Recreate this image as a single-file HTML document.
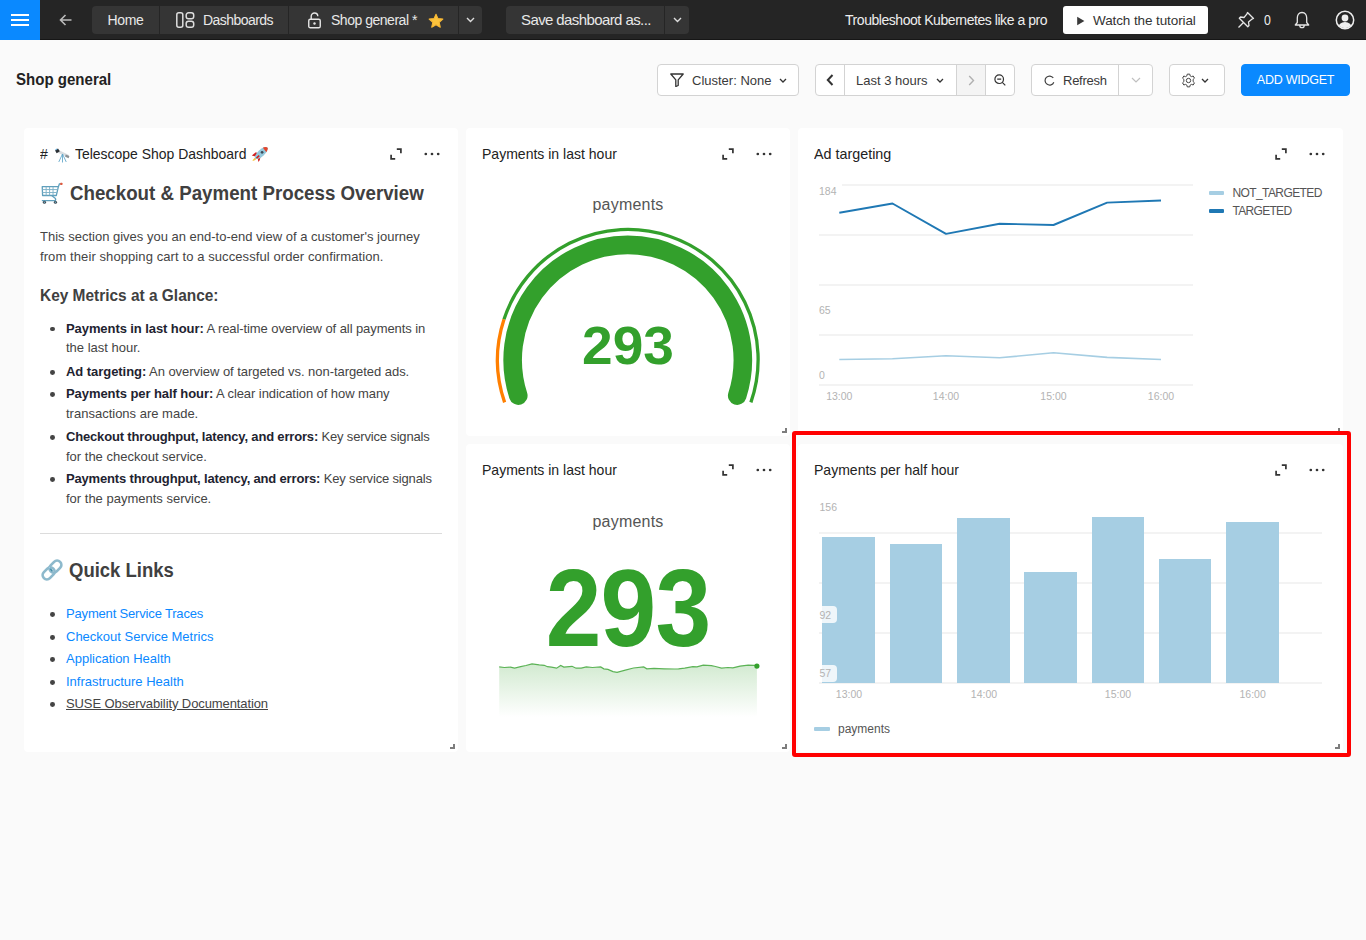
<!DOCTYPE html>
<html><head><meta charset="utf-8">
<style>
*{box-sizing:border-box;margin:0;padding:0}
html,body{width:1366px;height:940px;overflow:hidden;background:#fafafa;font-family:"Liberation Sans",sans-serif;color:#222}
.abs{position:absolute}
#top{position:absolute;left:0;top:0;width:1366px;height:40px;background:#252525;border-bottom:1px solid #161616}
#ham{position:absolute;left:0;top:0;width:40px;height:40px;background:#0a89ff}
#ham i{position:absolute;left:11px;width:18px;height:2px;background:#fff}
.tb{position:absolute;top:6px;height:28px;background:#353535;color:#e8e8e8;font-size:14px;letter-spacing:-0.35px;display:flex;align-items:center;white-space:nowrap}
.txt{position:absolute;white-space:nowrap}
.btn{position:absolute;top:64px;height:32px;background:#fff;border:1px solid #d3d3d3;border-radius:4px;color:#3a3a3a;font-size:13px;display:flex;align-items:center;white-space:nowrap}
.card{position:absolute;background:#fff;border-radius:4px}
.ctitle{position:absolute;left:16px;top:17px;font-size:15px;color:#222;white-space:nowrap;line-height:18px;transform-origin:0 0;transform:scaleX(0.935)}
.exp{position:absolute;width:12px;height:12px}
.dots{position:absolute}
.handle{position:absolute;width:5px;height:5px;border-right:2px solid #7d7d7d;border-bottom:2px solid #7d7d7d}
.md{color:#444;font-size:13px}
.md b{color:#1e2330}
ul.l{position:absolute;list-style:none}
ul.l li{position:relative;line-height:20px;white-space:nowrap}
ul.l li:before{content:"";position:absolute;left:-16px;top:8px;width:5px;height:5px;border-radius:50%;background:#333}
.dot{width:4.8px;height:4.8px;border-radius:50%;background:#444}
.lk{color:#0a88ff}
.axl{position:absolute;font-size:10.5px;color:#b3b3b3;white-space:nowrap}
</style></head><body>

<!-- TOP BAR -->
<div id="top">
  <div id="ham"><i style="top:14px"></i><i style="top:19px"></i><i style="top:24px"></i></div>
  <svg class="abs" style="left:58px;top:13px" width="16" height="14" viewBox="0 0 16 14"><path d="M7.5 2 L2.5 7 L7.5 12 M2.8 7 H13.5" fill="none" stroke="#bbb" stroke-width="1.6"/></svg>
  <div class="tb" style="left:92px;width:67px;border-radius:4px 0 0 4px;justify-content:center">Home</div>
  <div class="tb" style="left:160px;width:128px;padding-left:16px;letter-spacing:-0.55px">
    <svg width="19" height="16" viewBox="0 0 19 16" style="margin-right:8px"><rect x="0.8" y="0.8" width="6" height="14.4" rx="2" fill="none" stroke="#ddd" stroke-width="1.5"/><rect x="10.2" y="0.8" width="7.5" height="6" rx="2.3" fill="none" stroke="#ddd" stroke-width="1.5"/><rect x="10.2" y="9.2" width="7.5" height="6" rx="2.3" fill="none" stroke="#ddd" stroke-width="1.5"/></svg>Dashboards</div>
  <div class="tb" style="left:289px;width:169px;padding-left:18.5px;letter-spacing:-0.48px">
    <svg width="13" height="17" viewBox="0 0 13 17" style="margin-right:10.5px"><path d="M3.2 7 V4.3 A3.3 3.3 0 0 1 9.8 4.3" fill="none" stroke="#e6e6e6" stroke-width="1.4"/><rect x="0.75" y="7.2" width="11.5" height="8.6" rx="1.6" fill="none" stroke="#e6e6e6" stroke-width="1.4"/><circle cx="6.5" cy="11.5" r="1.2" fill="#e6e6e6"/></svg>Shop general *
    <svg width="16" height="16" viewBox="0 0 24 24" style="margin-left:11.5px;margin-top:1px"><path d="M12 1.8 L15 8.4 L22.3 9.1 L16.8 14 L18.4 21.3 L12 17.6 L5.6 21.3 L7.2 14 L1.7 9.1 L9 8.4 Z" fill="#fcc33c" stroke="#f7b733" stroke-width="1.6" stroke-linejoin="round"/></svg></div>
  <div class="tb" style="left:459px;width:23px;border-radius:0 4px 4px 0;justify-content:center"><svg width="9" height="6" viewBox="0 0 9 6"><path d="M1 1 L4.5 4.5 L8 1" fill="none" stroke="#ddd" stroke-width="1.4"/></svg></div>

  <div class="tb" style="left:506px;width:158px;border-radius:4px 0 0 4px;padding-left:15px;padding-bottom:2px;font-size:15px;letter-spacing:-0.6px">Save dashboard as...</div>
  <div class="tb" style="left:665px;width:24px;border-radius:0 4px 4px 0;justify-content:center"><svg width="9" height="6" viewBox="0 0 9 6"><path d="M1 1 L4.5 4.5 L8 1" fill="none" stroke="#ddd" stroke-width="1.4"/></svg></div>

  <div class="txt" style="left:845px;top:11px;font-size:14px;letter-spacing:-0.45px;line-height:18px;color:#eee">Troubleshoot Kubernetes like a pro</div>
  <div class="tb" style="left:1063px;width:145px;background:#fff;color:#333;border-radius:3px;padding-left:14px;font-size:13.5px;letter-spacing:-0.1px">
    <svg width="8" height="10" viewBox="0 0 8 10" style="margin-right:8px;margin-top:1px"><path d="M0.2 0.8 L7.4 5 L0.2 9.2 Z" fill="#3a3a3a"/></svg>Watch the tutorial</div>
  <svg class="abs" style="left:1237px;top:11px" width="18" height="18" viewBox="0 0 18 18"><path d="M10.5 1.5 L16.5 7.5 L14.8 8.2 L11.5 11 L12 14.5 L10.8 15.7 L2.3 7.2 L3.5 6 L7 6.5 L9.8 3.2 Z M6.5 11.5 L1.5 16.5" fill="none" stroke="#e6e6e6" stroke-width="1.3" stroke-linejoin="round"/></svg>
  <div class="txt" style="left:1263.5px;top:11px;font-size:14.5px;line-height:18px;color:#eee;transform-origin:0 0;transform:scaleX(0.85)">0</div>
  <svg class="abs" style="left:1294px;top:11px" width="16" height="18" viewBox="0 0 16 18"><path d="M8 1.5 C4.8 1.5 3.3 4 3.3 7 V11.5 L1.3 14 H14.7 L12.7 11.5 V7 C12.7 4 11.2 1.5 8 1.5 Z M5.8 14.5 A2.2 2.2 0 0 0 10.2 14.5" fill="none" stroke="#e6e6e6" stroke-width="1.3" stroke-linejoin="round"/></svg>
  <svg class="abs" style="left:1335px;top:10px" width="20" height="20" viewBox="0 0 20 20"><defs><clipPath id="uc"><circle cx="10" cy="10" r="8.2"/></clipPath></defs><circle cx="10" cy="10" r="8.7" fill="none" stroke="#eee" stroke-width="1.5"/><circle cx="10" cy="8" r="3.4" fill="#eee"/><ellipse cx="10" cy="18" rx="7" ry="6" fill="#eee" clip-path="url(#uc)"/></svg>
</div>

<!-- PAGE HEADER -->
<div class="txt" style="left:16px;top:70px;font-size:17px;font-weight:bold;line-height:20px;color:#222;transform-origin:0 0;transform:scaleX(0.885)">Shop general</div>

<div class="btn" style="left:657px;width:142px;padding-left:12px">
  <svg width="14" height="14" viewBox="0 0 14 14" style="margin-right:8px"><path d="M0.8 1 H13.2 L8.2 6.8 V12.5 L5.8 13.5 V6.8 Z" fill="none" stroke="#333" stroke-width="1.3" stroke-linejoin="round"/></svg>Cluster: None
  <svg width="8" height="5" viewBox="0 0 8 5" style="margin-left:8px"><path d="M1 1 L4 4 L7 1" fill="none" stroke="#333" stroke-width="1.3"/></svg></div>

<div class="btn" style="left:815px;width:200px;padding:0;overflow:hidden">
  <div style="width:29px;height:30px;border-right:1px solid #d3d3d3;display:flex;align-items:center;justify-content:center"><svg width="8" height="12" viewBox="0 0 8 12"><path d="M6.5 1 L1.8 6 L6.5 11" fill="none" stroke="#333" stroke-width="2"/></svg></div>
  <div style="width:112px;height:30px;border-right:1px solid #d3d3d3;display:flex;align-items:center;padding-left:11px">Last 3 hours<svg width="8" height="5" viewBox="0 0 8 5" style="margin-left:8px"><path d="M1 1 L4 4 L7 1" fill="none" stroke="#333" stroke-width="1.3"/></svg></div>
  <div style="width:29px;height:30px;border-right:1px solid #d3d3d3;background:#f4f4f4;display:flex;align-items:center;justify-content:center"><svg width="7" height="11" viewBox="0 0 7 11"><path d="M1.2 1 L5.5 5.5 L1.2 10" fill="none" stroke="#b0b0b0" stroke-width="1.4"/></svg></div>
  <div style="width:28px;height:30px;display:flex;align-items:center;justify-content:center"><svg width="12" height="12" viewBox="0 0 12 12"><circle cx="5.2" cy="5.2" r="4.3" fill="none" stroke="#333" stroke-width="1.2"/><path d="M3.2 5.2 H7.2 M8.3 8.3 L11.3 11.3" stroke="#333" stroke-width="1.2"/></svg></div>
</div>

<div class="btn" style="left:1031px;width:122px;padding:0;overflow:hidden">
  <div style="width:87px;height:30px;border-right:1px solid #d3d3d3;display:flex;align-items:center;padding-left:12px;letter-spacing:-0.25px"><svg width="11" height="11" viewBox="0 0 11 11" style="margin-right:8px"><path d="M9.3 3 A4.5 4.5 0 1 0 9.8 7.2" fill="none" stroke="#444" stroke-width="1.2"/></svg>Refresh</div>
  <div style="width:33px;height:30px;display:flex;align-items:center;justify-content:center"><svg width="10" height="6" viewBox="0 0 10 6"><path d="M1 1 L5 5 L9 1" fill="none" stroke="#c0c0c0" stroke-width="1.2"/></svg></div>
</div>

<div class="btn" style="left:1169px;width:56px;padding-left:12px">
  <svg width="15" height="15" viewBox="0 0 24 24" style="margin-right:5px;margin-left:-1px"><path d="M12 8.5A3.5 3.5 0 1 0 12 15.5A3.5 3.5 0 1 0 12 8.5Z M10 1.8H14L14.6 4.6L16.8 5.8L19.5 4.8L21.5 8.3L19.4 10.2V13.8L21.5 15.7L19.5 19.2L16.8 18.2L14.6 19.4L14 22.2H10L9.4 19.4L7.2 18.2L4.5 19.2L2.5 15.7L4.6 13.8V10.2L2.5 8.3L4.5 4.8L7.2 5.8L9.4 4.6Z" fill="none" stroke="#444" stroke-width="1.6" stroke-linejoin="round"/></svg>
  <svg width="8" height="5" viewBox="0 0 8 5"><path d="M1 1 L4 4 L7 1" fill="none" stroke="#333" stroke-width="1.3"/></svg></div>

<div class="btn" style="left:1241px;width:109px;background:#0a89ff;border-color:#0a89ff;color:#fff;font-size:12.5px;letter-spacing:-0.25px;justify-content:center">ADD WIDGET</div>


<!-- CARD 1 markdown -->
<div class="card" style="left:24px;top:128px;width:434px;height:624px">
  <svg class="abs" style="left:366px;top:20.3px" width="12" height="12" viewBox="0 0 12 12"><path d="M6.8 1.1 H10.9 V5.2 M5.2 10.9 H1.1 V6.8" fill="none" stroke="#333" stroke-width="1.7"/></svg>
  <svg class="abs" style="left:399px;top:23.8px" width="18" height="4" viewBox="0 0 18 4"><circle cx="2.8" cy="2" r="1.35" fill="#333"/><circle cx="9" cy="2" r="1.35" fill="#333"/><circle cx="15.2" cy="2" r="1.35" fill="#333"/></svg>
  <div class="ctitle" style="top:16.95px">#</div>
  <svg class="abs" style="left:30px;top:18px" width="17" height="17" viewBox="0 0 32 32">
    <path d="M3 11 L8 7 L28 17 L26 21 Z" fill="#d9dde0"/>
    <path d="M2 8.5 L7.5 4.5 L11 10 L5 13.5 Z" fill="#2b2f33"/>
    <path d="M3 7.5 L6 5.5" stroke="#5aa9d8" stroke-width="2"/>
    <path d="M22 16 L29 19 L27.5 23 L21 20 Z" fill="#8a8f93"/>
    <path d="M16 15 L9 30 M16 15 L16 31 M16 15 L23 30" stroke="#5ba3c7" stroke-width="1.6" fill="none"/>
  </svg>
  <div class="ctitle" style="left:51px;top:16.95px;transform:scaleX(0.93)">Telescope Shop Dashboard</div>
  <svg class="abs" style="left:222px;top:12px" width="26" height="26" viewBox="0 0 26 26">
    <path d="M5.8 15.6 L9.8 12.2 L12 13.2 L9.4 16.4 Z" fill="#d32020"/>
    <path d="M11.6 17.6 L14.8 15.6 L13.8 20 L12.4 22 Z" fill="#d32020"/>
    <path d="M10 17 C8 18 6.8 19.8 6.5 21 C8 20.6 10 19.8 11.2 18.3 Z" fill="#f8c43c"/>
    <defs><clipPath id="rk"><ellipse cx="15.3" cy="13" rx="8.2" ry="3.3" transform="rotate(-43 15.3 13)"/></clipPath></defs>
    <g clip-path="url(#rk)"><rect x="0" y="0" width="26" height="26" fill="#93c8dc"/><path d="M15.5 6 L24 6 L24 14 L21 13 Z" fill="#e5452b"/></g>
    <circle cx="16.1" cy="12.3" r="1.35" fill="#3d4a58"/>
    <path d="M10.5 18.2 L13.2 15.6" stroke="#d32020" stroke-width="1.6"/>
  </svg>
  <svg class="abs" style="left:17px;top:54px" width="22" height="22" viewBox="0 0 32 32">
    <path d="M1.8 6.8 H25.3 L22.3 19.6 H2.3 Z" fill="none" stroke="#5f9fbc" stroke-width="1.9" stroke-linejoin="round"/>
    <path d="M2 11 H24.3 M2.1 15.3 H23.3 M7.5 7 V19.5 M12.5 7 V19.5 M17.5 7 V19.5" stroke="#7fb2c8" stroke-width="1.4"/>
    <path d="M25.3 6.8 L26.8 2.6 H29" fill="none" stroke="#5f9fbc" stroke-width="1.9"/>
    <rect x="28" y="1" width="3.2" height="3.4" rx="0.8" fill="#e05a3f"/>
    <path d="M15.5 19.6 L20.5 23.5 C22 25 21.5 27 19.5 27 H1.2" fill="none" stroke="#5f9fbc" stroke-width="1.9"/>
    <circle cx="5" cy="29.5" r="2.3" fill="#3d4952"/><circle cx="21" cy="29.5" r="2.3" fill="#3d4952"/>
    <circle cx="5" cy="29.5" r="1" fill="#6fb0c9"/><circle cx="21" cy="29.5" r="1" fill="#6fb0c9"/>
  </svg>
  <div class="txt" style="left:46px;top:53.3px;font-size:20px;line-height:24px;font-weight:bold;color:#404040;transform-origin:0 0;transform:scaleX(0.936)">Checkout &amp; Payment Process Overview</div>
  <div class="txt md" style="left:16px;top:98.8px;line-height:20px">This section gives you an end-to-end view of a customer's journey<br><span style="letter-spacing:0.09px">from their shopping cart to a successful order confirmation.</span></div>
  <div class="txt" style="left:16px;top:157.8px;font-size:17px;line-height:20px;font-weight:bold;color:#404040;transform-origin:0 0;transform:scaleX(0.908)">Key Metrics at a Glance:</div>
  <div class="txt md" style="left:42px;top:190.5px;line-height:20px;letter-spacing:-0.08px"><b>Payments in last hour:</b> A real-time overview of all payments in</div>
  <div class="txt md" style="left:42px;top:210.3px;line-height:20px">the last hour.</div>
  <div class="txt md" style="left:42px;top:233.7px;line-height:20px;letter-spacing:-0.05px"><b>Ad targeting:</b> An overview of targeted vs. non-targeted ads.</div>
  <div class="txt md" style="left:42px;top:256.2px;line-height:20px;letter-spacing:-0.07px"><b>Payments per half hour:</b> A clear indication of how many</div>
  <div class="txt md" style="left:42px;top:276px;line-height:20px">transactions are made.</div>
  <div class="txt md" style="left:42px;top:299.1px;line-height:20px;letter-spacing:-0.17px"><b>Checkout throughput, latency, and errors:</b> Key service signals</div>
  <div class="txt md" style="left:42px;top:318.9px;line-height:20px">for the checkout service.</div>
  <div class="txt md" style="left:42px;top:341.3px;line-height:20px;letter-spacing:-0.17px"><b>Payments throughput, latency, and errors:</b> Key service signals</div>
  <div class="txt md" style="left:42px;top:361.1px;line-height:20px">for the payments service.</div>
  <i class="abs dot" style="left:26px;top:198.6px"></i>
  <i class="abs dot" style="left:26px;top:241.8px"></i>
  <i class="abs dot" style="left:26px;top:264.3px"></i>
  <i class="abs dot" style="left:26px;top:307.2px"></i>
  <i class="abs dot" style="left:26px;top:349.4px"></i>
  <div class="abs" style="left:16px;top:405px;width:402px;height:1px;background:#dcdcdc"></div>
  <svg class="abs" style="left:16px;top:429.5px" width="24" height="24" viewBox="0 0 32 32">
    <path d="M14.2 9.8 L18.8 5.2 A5.6 5.6 0 0 1 26.8 13.2 L22.2 17.8 A5.6 5.6 0 0 1 14.2 9.8 Z" fill="none" stroke="#8db9cc" stroke-width="3.6"/>
    <path d="M5.2 18.8 L9.8 14.2 A5.6 5.6 0 0 1 17.8 22.2 L13.2 26.8 A5.6 5.6 0 0 1 5.2 18.8 Z" fill="none" stroke="#8db9cc" stroke-width="3.6"/>
    <path d="M13.3 13.6 L16.6 17.6" stroke="#3c8aa5" stroke-width="1.8"/>
    <path d="M12.4 12.2 L14 14.8" stroke="#a9d4f5" stroke-width="1"/>
  </svg>
  <div class="txt" style="left:45px;top:429.8px;font-size:20px;line-height:24px;font-weight:bold;color:#404040;transform-origin:0 0;transform:scaleX(0.925)">Quick Links</div>
  <div class="txt md lk" style="left:42px;top:475.7px;line-height:20px;letter-spacing:-0.17px">Payment Service Traces</div>
  <div class="txt md lk" style="left:42px;top:499px;line-height:20px">Checkout Service Metrics</div>
  <div class="txt md lk" style="left:42px;top:521.2px;line-height:20px">Application Health</div>
  <div class="txt md lk" style="left:42px;top:544px;line-height:20px">Infrastructure Health</div>
  <div class="txt md" style="left:42px;top:565.7px;line-height:20px;letter-spacing:-0.1px;text-decoration:underline;color:#444">SUSE Observability Documentation</div>
  <i class="abs dot" style="left:26px;top:483.8px"></i>
  <i class="abs dot" style="left:26px;top:507.1px"></i>
  <i class="abs dot" style="left:26px;top:529.3px"></i>
  <i class="abs dot" style="left:26px;top:552.1px"></i>
  <i class="abs dot" style="left:26px;top:573.8px"></i>
  <i class="handle" style="left:426px;top:616px"></i>
</div>

<!-- CARD 2 gauge -->
<div class="card" style="left:466px;top:128px;width:324px;height:308px">
  <div class="ctitle" style="top:16.95px">Payments in last hour</div>
  <svg class="abs" style="left:256px;top:20.3px" width="12" height="12" viewBox="0 0 12 12"><path d="M6.8 1.1 H10.9 V5.2 M5.2 10.9 H1.1 V6.8" fill="none" stroke="#333" stroke-width="1.7"/></svg>
  <svg class="abs" style="left:289px;top:23.8px" width="18" height="4" viewBox="0 0 18 4"><circle cx="2.8" cy="2" r="1.35" fill="#333"/><circle cx="9" cy="2" r="1.35" fill="#333"/><circle cx="15.2" cy="2" r="1.35" fill="#333"/></svg>

  <div class="txt" style="left:0;width:324px;text-align:center;top:66.7px;font-size:16px;line-height:20px;color:#555;letter-spacing:0.2px">payments</div>
  <svg class="abs" style="left:0;top:0" width="324" height="307"><path d="M38.60 274.41 A130.25 130.25 0 0 1 38.02 191.32" fill="none" stroke="#ff7f00" stroke-width="3.3"/><path d="M38.02 191.32 A130.25 130.25 0 1 1 284.90 274.41" fill="none" stroke="#33a02c" stroke-width="3.3"/><path d="M52.28 267.57 A115.1 115.1 0 1 1 271.22 267.57" fill="none" stroke="#33a02c" stroke-width="18.6" stroke-linecap="round"/></svg>
  <div class="txt" style="left:0;width:324px;text-align:center;top:190.87px;font-size:54.5px;line-height:54.5px;font-weight:bold;color:#33a02c;transform:scaleX(1.01)">293</div>
  <i class="handle" style="left:316px;top:300px"></i>
</div>
<!-- CARD 4 big number -->
<div class="card" style="left:466px;top:444px;width:324px;height:308px">
  <div class="ctitle" style="top:16.95px">Payments in last hour</div>
  <svg class="abs" style="left:256px;top:20.3px" width="12" height="12" viewBox="0 0 12 12"><path d="M6.8 1.1 H10.9 V5.2 M5.2 10.9 H1.1 V6.8" fill="none" stroke="#333" stroke-width="1.7"/></svg>
  <svg class="abs" style="left:289px;top:23.8px" width="18" height="4" viewBox="0 0 18 4"><circle cx="2.8" cy="2" r="1.35" fill="#333"/><circle cx="9" cy="2" r="1.35" fill="#333"/><circle cx="15.2" cy="2" r="1.35" fill="#333"/></svg>

  <div class="txt" style="left:0;width:324px;text-align:center;top:68.2px;font-size:16px;line-height:20px;color:#555;letter-spacing:0.2px">payments</div>
  <svg class="abs" style="left:0;top:0" width="324" height="307"><defs><linearGradient id="sg" x1="0" y1="0" x2="0" y2="1"><stop offset="0" stop-color="#33a02c" stop-opacity="0.22"/><stop offset="1" stop-color="#33a02c" stop-opacity="0"/></linearGradient></defs>
  <path d="M33.2 273 L33.2 222.9 L38.3 223.5 L44.5 223.1 L48.6 224.2 L54.7 222.7 L59.9 221.5 L66.0 219.9 L73.2 220.9 L78.3 221.3 L81.4 222.7 L85.5 223.1 L90.6 224.2 L94.7 221.5 L97.8 223.1 L106.0 222.3 L110.1 224.2 L115.2 224.2 L120.3 222.9 L126.5 223.5 L134.7 222.9 L137.8 224.8 L141.9 225.4 L147.0 227.6 L151.1 228.3 L159.3 226.2 L167.5 224.0 L177.7 222.9 L180.8 224.8 L188.0 224.4 L198.2 224.8 L208.5 225.0 L212.6 224.8 L218.7 224.2 L226.9 222.7 L231.0 222.9 L237.2 221.1 L245.4 221.7 L249.5 222.5 L255.6 224.2 L261.8 223.5 L266.9 223.8 L274.1 222.1 L282.2 221.1 L288.4 221.3 L290.9 221.5 L290.9 273 Z" fill="url(#sg)"/><polyline points="33.2,222.9 38.3,223.5 44.5,223.1 48.6,224.2 54.7,222.7 59.9,221.5 66.0,219.9 73.2,220.9 78.3,221.3 81.4,222.7 85.5,223.1 90.6,224.2 94.7,221.5 97.8,223.1 106.0,222.3 110.1,224.2 115.2,224.2 120.3,222.9 126.5,223.5 134.7,222.9 137.8,224.8 141.9,225.4 147.0,227.6 151.1,228.3 159.3,226.2 167.5,224.0 177.7,222.9 180.8,224.8 188.0,224.4 198.2,224.8 208.5,225.0 212.6,224.8 218.7,224.2 226.9,222.7 231.0,222.9 237.2,221.1 245.4,221.7 249.5,222.5 255.6,224.2 261.8,223.5 266.9,223.8 274.1,222.1 282.2,221.1 288.4,221.3 290.9,221.5" fill="none" stroke="#5cb356" stroke-width="1.2"/><circle cx="290.9" cy="222.10000000000002" r="2.6" fill="#33a02c"/></svg>
  <div class="txt" style="left:0;width:324px;text-align:center;top:110.33px;font-size:109px;line-height:109px;font-weight:bold;color:#33a02c;transform:scaleX(0.919);letter-spacing:-1px">293</div>
  <i class="handle" style="left:316px;top:300px"></i>
</div>
<!-- CARD 3 ad targeting -->
<div class="card" style="left:798px;top:128px;width:545px;height:308px">
  <div class="ctitle" style="top:16.65px;transform:scaleX(0.955)">Ad targeting</div>
  <svg class="abs" style="left:477px;top:20px" width="12" height="12" viewBox="0 0 12 12"><path d="M6.8 1.1 H10.9 V5.2 M5.2 10.9 H1.1 V6.8" fill="none" stroke="#333" stroke-width="1.7"/></svg>
  <svg class="abs" style="left:510px;top:23.5px" width="18" height="4" viewBox="0 0 18 4"><circle cx="2.8" cy="2" r="1.35" fill="#333"/><circle cx="9" cy="2" r="1.35" fill="#333"/><circle cx="15.2" cy="2" r="1.35" fill="#333"/></svg>

  <div class="abs" style="left:44px;top:55.5px;width:350.7px;height:2px;background:#f3f3f3"></div><div class="abs" style="left:20.7px;top:105.7px;width:374.0px;height:2px;background:#f3f3f3"></div><div class="abs" style="left:20.7px;top:155.9px;width:374.0px;height:2px;background:#f3f3f3"></div><div class="abs" style="left:20.7px;top:206px;width:374.0px;height:2px;background:#f3f3f3"></div><div class="abs" style="left:20.7px;top:255.8px;width:374.0px;height:2px;background:#f3f3f3"></div>
  <div class="axl" style="left:21px;top:55.8px;line-height:14px">184</div>
  <div class="axl" style="left:21px;top:174.8px;line-height:14px">65</div>
  <div class="axl" style="left:21px;top:240.0px;line-height:14px">0</div>
  <div class="axl" style="left:11.3px;width:60px;text-align:center;top:261.2px;line-height:14px">13:00</div><div class="axl" style="left:118.0px;width:60px;text-align:center;top:261.2px;line-height:14px">14:00</div><div class="axl" style="left:225.5px;width:60px;text-align:center;top:261.2px;line-height:14px">15:00</div><div class="axl" style="left:333.0px;width:60px;text-align:center;top:261.2px;line-height:14px">16:00</div>
  <svg class="abs" style="left:0;top:0" width="545" height="307"><polyline points="41.3,231.5 94.5,230.7 148.0,227.7 201.6,229.8 255.5,224.8 309.1,229.4 363.0,231.5" fill="none" stroke="#a6cee3" stroke-width="1.6" stroke-linejoin="round"/><polyline points="41.3,84.8 94.5,75.5 148.0,105.9 201.6,95.7 255.5,97.0 309.1,74.6 363.0,72.5" fill="none" stroke="#1f78b4" stroke-width="1.9" stroke-linejoin="round"/></svg>
  <div class="abs" style="left:410.8px;top:62.5px;width:15px;height:4px;background:#a6cee3;border-radius:1px"></div>
  <div class="abs" style="left:410.8px;top:80.7px;width:15px;height:4px;background:#1f78b4;border-radius:1px"></div>
  <div class="txt" style="left:434.5px;top:56.5px;font-size:12px;line-height:16px;color:#555;letter-spacing:-0.6px">NOT_TARGETED</div>
  <div class="txt" style="left:434.5px;top:74.7px;font-size:12px;line-height:16px;color:#555;letter-spacing:-0.7px">TARGETED</div>
  <i class="handle" style="left:537px;top:300px"></i>
</div>
<!-- CARD 5 bar chart -->
<div class="card" style="left:798px;top:444px;width:545px;height:308px">
  <div class="ctitle" style="top:16.65px">Payments per half hour</div>
  <svg class="abs" style="left:477px;top:20.0px" width="12" height="12" viewBox="0 0 12 12"><path d="M6.8 1.1 H10.9 V5.2 M5.2 10.9 H1.1 V6.8" fill="none" stroke="#333" stroke-width="1.7"/></svg>
  <svg class="abs" style="left:510px;top:23.5px" width="18" height="4" viewBox="0 0 18 4"><circle cx="2.8" cy="2" r="1.35" fill="#333"/><circle cx="9" cy="2" r="1.35" fill="#333"/><circle cx="15.2" cy="2" r="1.35" fill="#333"/></svg>

  <div style="position:absolute;left:0;top:0">
  <div class="abs" style="left:20.7px;top:88px;width:503.5px;height:2px;background:#f3f3f3"></div><div class="abs" style="left:20.7px;top:137.8px;width:503.5px;height:2px;background:#f3f3f3"></div><div class="abs" style="left:20.7px;top:187.9px;width:503.5px;height:2px;background:#f3f3f3"></div><div class="abs" style="left:20.7px;top:238.2px;width:503.5px;height:2px;background:#f3f3f3"></div>
  <div class="abs" style="left:24.3px;top:92.8px;width:52.7px;height:146.2px;background:#a6cee3"></div><div class="abs" style="left:91.5px;top:99.5px;width:52.7px;height:139.5px;background:#a6cee3"></div><div class="abs" style="left:159.0px;top:74.2px;width:52.7px;height:164.8px;background:#a6cee3"></div><div class="abs" style="left:226.0px;top:127.7px;width:52.7px;height:111.3px;background:#a6cee3"></div><div class="abs" style="left:293.5px;top:72.5px;width:52.7px;height:166.5px;background:#a6cee3"></div><div class="abs" style="left:360.5px;top:114.7px;width:52.8px;height:124.3px;background:#a6cee3"></div><div class="abs" style="left:428.0px;top:77.6px;width:52.7px;height:161.4px;background:#a6cee3"></div>
  <div class="axl" style="left:21.5px;top:56.0px;line-height:14px">156</div>
  <div class="abs" style="left:21.5px;top:162.0px;width:17.5px;height:17px;background:rgba(255,255,255,0.82);border-radius:0 4px 4px 0"></div>
  <div class="axl" style="left:21.5px;top:163.6px;line-height:14px">92</div>
  <div class="abs" style="left:21.5px;top:221.0px;width:17.5px;height:17px;background:rgba(255,255,255,0.82);border-radius:0 4px 4px 0"></div>
  <div class="axl" style="left:21.5px;top:222.2px;line-height:14px">57</div>
  <div class="axl" style="left:21.0px;width:60px;text-align:center;top:243.2px;line-height:14px">13:00</div><div class="axl" style="left:156.0px;width:60px;text-align:center;top:243.2px;line-height:14px">14:00</div><div class="axl" style="left:290.0px;width:60px;text-align:center;top:243.2px;line-height:14px">15:00</div><div class="axl" style="left:424.6px;width:60px;text-align:center;top:243.2px;line-height:14px">16:00</div>
  <div class="abs" style="left:16px;top:282.6px;width:16px;height:4px;background:#a6cee3;border-radius:1px"></div>
  <div class="txt" style="left:40px;top:276.6px;font-size:12px;line-height:16px;color:#555">payments</div>
  </div>
  <i class="handle" style="left:537px;top:300px"></i>
</div>
<div class="abs" style="left:792px;top:431px;width:559px;height:326px;border:4px solid #ff0000;border-radius:3px"></div>

</body></html>
